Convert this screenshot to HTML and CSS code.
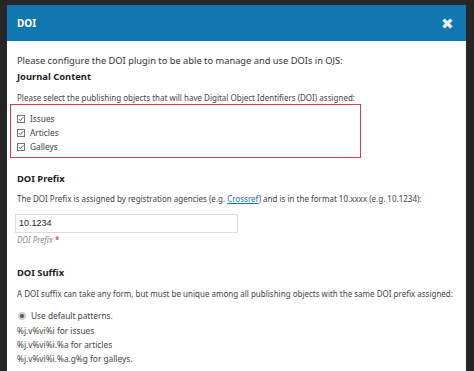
FILE: index.html
```html
<!DOCTYPE html>
<html lang="en">
<head>
  <meta charset="UTF-8" />
  <title>DOI</title>
  <link rel="stylesheet" href="styles.css">
</head>
<body>
  <div class="modal">
    <div class="modal-header">
      <span class="modal-title">DOI</span>
      <span class="close">&#x2716;</span>
    </div>

    <div class="modal-body">
      <p class="intro">Please configure the DOI plugin to be able to manage and use DOIs in OJS:</p>

      <!-- Journal content -->
      <h3 class="section-title first">Journal Content</h3>
      <p class="desc">Please select the publishing objects that will have Digital Object Identifiers (DOI) assigned:</p>
      <div class="highlight">
        <label class="check">
          <svg class="box" viewBox="0 0 8 8"><rect x="0.5" y="0.5" width="7" height="7" fill="#fff" stroke="#777"/><path d="M1.8 4.1 L3.3 5.6 L6.2 2.3" fill="none" stroke="#444" stroke-width="0.9"/></svg>Issues
        </label>
        <label class="check">
          <svg class="box" viewBox="0 0 8 8"><rect x="0.5" y="0.5" width="7" height="7" fill="#fff" stroke="#777"/><path d="M1.8 4.1 L3.3 5.6 L6.2 2.3" fill="none" stroke="#444" stroke-width="0.9"/></svg>Articles
        </label>
        <label class="check">
          <svg class="box" viewBox="0 0 8 8"><rect x="0.5" y="0.5" width="7" height="7" fill="#fff" stroke="#777"/><path d="M1.8 4.1 L3.3 5.6 L6.2 2.3" fill="none" stroke="#444" stroke-width="0.9"/></svg>Galleys
        </label>
      </div>

      <!-- Prefix -->
      <h3 class="section-title prefix">DOI Prefix</h3>
      <p class="desc">The DOI Prefix is assigned by registration agencies (e.g. <a href="#">Crossref</a>) and is in the format 10.xxxx (e.g. 10.1234):</p>
      <div class="field">10.1234</div>
      <div class="field-label">DOI Prefix <span class="req">*</span></div>

      <!-- Suffix -->
      <h3 class="section-title suffix">DOI Suffix</h3>
      <p class="desc">A DOI suffix can take any form, but must be unique among all publishing objects with the same DOI prefix assigned:</p>
      <label class="radio"><span class="dot"></span>Use default patterns.</label>
      <div class="patterns">
        <div>%j.v%vi%i for issues</div>
        <div>%j.v%vi%i.%a for articles</div>
        <div>%j.v%vi%i.%a.g%g for galleys.</div>
      </div>
    </div>
  </div>
</body>
</html>
```

FILE: styles.css
```css
body {
  margin: 0;
  height: 371px;
  overflow: hidden;
  background: #262626;
  font-family: 'Noto Sans', sans-serif;
  color: #3a3a3a;
}

.modal {
  margin: 5px 8px 0 7px;
  height: 366px;
  background: #fff;
  overflow: hidden;
}

.modal-header {
  height: 36px;
  background: #1177b1;
  display: flex;
  align-items: center;
  justify-content: space-between;
  padding: 0 12px 0 10px;
  color: #fff;
}

.modal-title {
  font-size: 10px;
  font-weight: bold;
}

.close {
  font-size: 15px;
  color: #e8eef3;
  line-height: 1;
}

.modal-body {
  padding: 0 10px;
}

.intro {
  margin: 13px 0 0;
  font-size: 9.3px;
  line-height: 13px;
  color: #333;
}

.section-title {
  margin: 3px 0 0;
  font-size: 9.4px;
  line-height: 13px;
  font-weight: bold;
  color: #222;
}

.section-title.prefix {
  margin-top: 14px;
}

.section-title.suffix {
  margin-top: 21px;
}

.desc {
  margin: 8px 0 0;
  font-size: 8px;
  line-height: 11px;
  color: #444;
}

.section-title.first + .desc {
  margin-top: 9px;
}

.section-title.suffix + .desc {
  margin-top: 9px;
}

.highlight {
  margin: 1px 0 0 -7px;
  width: 343px;
  border: 1.5px solid #de3d47;
  padding: 6.5px 0 3.5px 6px;
}

.check {
  display: flex;
  align-items: center;
  height: 14px;
  font-size: 8.3px;
  color: #444;
}

.box {
  width: 8px;
  height: 8px;
  margin-right: 5px;
}

a {
  color: #1b6fa8;
}

.field {
  margin: 9.5px 0 0 -2px;
  width: 218px;
  height: 17px;
  border: 1px solid #ddd;
  padding-left: 3px;
  font-family: 'Liberation Sans', sans-serif;
  font-size: 9px;
  line-height: 17px;
  color: #222;
}

.field-label {
  margin-top: 1.5px;
  font-size: 8px;
  line-height: 11px;
  font-style: italic;
  color: #888;
}

.req {
  color: #d0103a;
  font-style: normal;
}

.radio {
  display: flex;
  align-items: center;
  margin-top: 9.5px;
  height: 14px;
  font-size: 8.3px;
  color: #444;
}

.dot {
  width: 4px;
  height: 4px;
  border-radius: 50%;
  background: #555;
  border: 2px solid #ccc;
  margin: 0 5px 0 1px;
}

.patterns {
  margin-top: 1px;
  font-size: 8.3px;
  line-height: 14px;
  color: #444;
}
```
